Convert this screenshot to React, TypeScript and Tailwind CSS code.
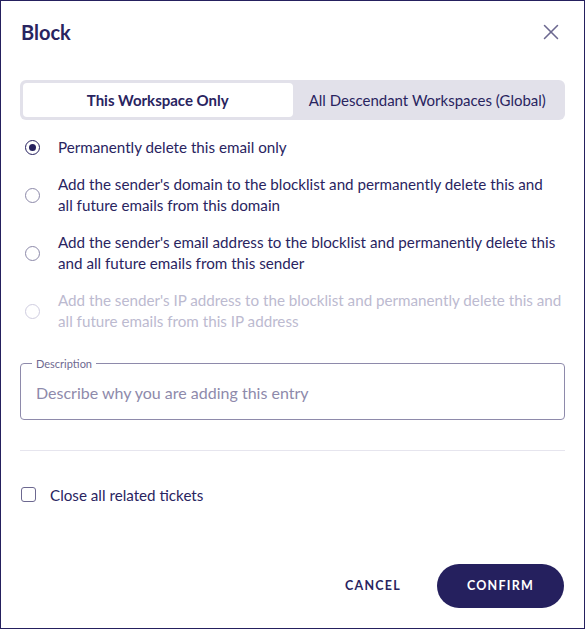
import { X } from "lucide-react";

const options = [
  { lines: ["Permanently delete this email only"], checked: true },
  { lines: ["Add the sender's domain to the blocklist and permanently delete this and", "all future emails from this domain"] },
  { lines: ["Add the sender's email address to the blocklist and permanently delete this", "and all future emails from this sender"] },
  { lines: ["Add the sender's IP address to the blocklist and permanently delete this and", "all future emails from this IP address"], disabled: true },
];

function Radio({ checked, disabled }: { checked?: boolean; disabled?: boolean }) {
  if (checked)
    return (
      <span className="flex h-[15px] w-[15px] shrink-0 items-center justify-center rounded-full border-[1.5px] border-[#25205e]">
        <span className="h-[7px] w-[7px] rounded-full bg-[#25205e]" />
      </span>
    );
  return (
    <span className={`h-[15px] w-[15px] shrink-0 rounded-full border-[1.5px] ${disabled ? "border-[#cfcde0]" : "border-[#8c89a9]"}`} />
  );
}

export default function App() {
  return (
    <div className="h-[629px] w-[585px] border border-[#25205e] bg-white font-['Lato',sans-serif] text-[#29245f]">
      <div className="flex items-center justify-between pl-5 pr-5 pt-[18px]">
        <h2 className="text-[20px] font-bold leading-6">Block</h2>
        <X className="h-[26px] w-[26px] text-[#6c6890]" strokeWidth={1.4} />
      </div>

      <div className="mx-[19px] mt-[35px] flex h-10 rounded-md bg-[#e2e1ea] p-[3px] text-[15px]">
        <button className="flex-1 rounded-[4px] bg-white font-bold">This Workspace Only</button>
        <button className="flex-1">All Descendant Workspaces (Global)</button>
      </div>

      <div className="mt-[17px] flex flex-col gap-[15px] px-[19px]">
        {options.map((o) => (
          <label key={o.lines[0]} className={`flex items-center gap-[18px] pl-[5px] text-[15.2px] leading-[21.5px] ${o.disabled ? "text-[#bcbad0]" : ""}`}>
            <Radio checked={o.checked} disabled={o.disabled} />
            <span className="flex flex-col whitespace-nowrap">
              {o.lines.map((l) => (
                <span key={l}>{l}</span>
              ))}
            </span>
          </label>
        ))}
      </div>

      <fieldset className="mx-[19px] mt-[25px] h-[62px] rounded-[4px] border border-[#8e8aab] px-[11px] pb-0">
        <legend className="px-[4px] text-[11px] leading-[11px] text-[#6e6a91]">Description</legend>
        <div className="pl-[4px] pt-[12px] text-[16px] text-[#8e8aab]">Describe why you are adding this entry</div>
      </fieldset>

      <div className="mx-[19px] mt-[30px] h-px bg-[#e6e5ee]" />

      <label className="mt-[33px] flex items-center gap-[14px] pl-5 text-[15.2px]">
        <span className="h-[15px] w-[15px] rounded-[3px] border-[1.5px] border-[#6c6890]" />
        Close all related tickets
      </label>

      <div className="mt-[58px] flex items-center justify-end gap-[9px] pr-5">
        <button className="h-11 px-[27px] text-[12.5px] font-bold tracking-[0.1em]">CANCEL</button>
        <button className="h-11 w-[127px] rounded-full bg-[#25205e] text-[12.5px] font-bold tracking-[0.1em] text-white">CONFIRM</button>
      </div>
    </div>
  );
}
